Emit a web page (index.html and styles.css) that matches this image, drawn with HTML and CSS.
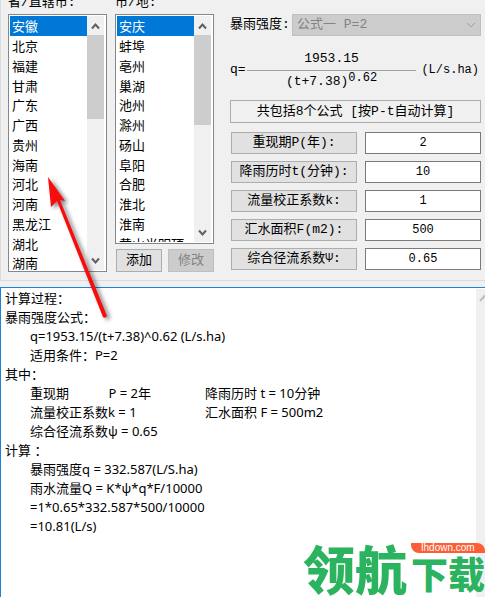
FILE: index.html
```html
<!DOCTYPE html>
<html lang="zh-CN">
<head>
<meta charset="utf-8">
<title>暴雨强度计算</title>
<link rel="stylesheet" href="styles.css">
</head>
<body>
<main class="app">
  <section class="panel">
    <div class="column list-column">
      <label class="heading" for="province">省/直辖市:</label>
      <div class="listbox">
        <select id="province" size="13">
          <option selected>安徽</option><option>北京</option><option>福建</option><option>甘肃</option>
          <option>广东</option><option>广西</option><option>贵州</option><option>海南</option>
          <option>河北</option><option>河南</option><option>黑龙江</option><option>湖北</option>
          <option>湖南</option>
        </select>
        <div class="scrollbar" aria-hidden="true">
          <svg class="arrow" viewBox="0 0 17 19"><path d="M5 12.500L8.500 8.500L12 12.500"/></svg>
          <div class="track"><div class="thumb" style="height: 39%"></div></div>
          <svg class="arrow" viewBox="0 0 17 19"><path d="M5 7.500L8.500 11.500L12 7.500"/></svg>
        </div>
      </div>
    </div>
    <div class="column list-column">
      <label class="heading" for="city">市/地:</label>
      <div class="listbox">
        <select id="city" size="11">
          <option selected>安庆</option><option>蚌埠</option><option>亳州</option><option>巢湖</option>
          <option>池州</option><option>滁州</option><option>砀山</option><option>阜阳</option>
          <option>合肥</option><option>淮北</option><option>淮南</option><option>黄山光明顶</option>
        </select>
        <div class="scrollbar" aria-hidden="true">
          <svg class="arrow" viewBox="0 0 17 19"><path d="M5 12.500L8.500 8.500L12 12.500"/></svg>
          <div class="track"><div class="thumb" style="height: 48%"></div></div>
          <svg class="arrow" viewBox="0 0 17 19"><path d="M5 7.500L8.500 11.500L12 7.500"/></svg>
        </div>
      </div>
      <div class="actions">
        <button type="button" class="button">添加</button>
        <button type="button" class="button" disabled>修改</button>
      </div>
    </div>
    <div class="column form-column">
      <div class="formula-pick">
        <label for="formula">暴雨强度:</label>
        <select class="combo" id="formula" disabled><option>公式一 P=2</option></select>
      </div>
      <div class="formula">
        <span>q=</span>
        <span class="fraction">
          <span class="numerator">1953.15</span>
          <span class="denominator">(t+7.38)<sup>0.62</sup></span>
        </span>
        <span class="unit">(L/s.ha)</span>
      </div>
      <button type="button" class="button summary">共包括8个公式 [按P-t自动计算]</button>
      <div class="fields">
        <button type="button" class="button" id="l-period">重现期P(年):</button>
        <input class="value" aria-labelledby="l-period" value="2">
        <button type="button" class="button" id="l-duration">降雨历时t(分钟):</button>
        <input class="value" aria-labelledby="l-duration" value="10">
        <button type="button" class="button" id="l-factor">流量校正系数k:</button>
        <input class="value" aria-labelledby="l-factor" value="1">
        <button type="button" class="button" id="l-area">汇水面积F(m2):</button>
        <input class="value" aria-labelledby="l-area" value="500">
        <button type="button" class="button" id="l-runoff">综合径流系数Ψ:</button>
        <input class="value" aria-labelledby="l-runoff" value="0.65">
      </div>
    </div>
  </section>
  <div class="result">
    <textarea aria-label="计算过程" readonly>计算过程：
暴雨强度公式：
	q=1953.15/(t+7.38)^0.62 (L/s.ha)
	适用条件：P=2
其中：
	重现期		 P = 2年			降雨历时 t = 10分钟
	流量校正系数k = 1			汇水面积 F = 500m2
	综合径流系数ψ = 0.65
计算 ：
	暴雨强度q = 332.587(L/S.ha)
	雨水流量Q = K*ψ*q*F/10000
	=1*0.65*332.587*500/10000
	=10.81(L/s)</textarea>
    <div class="scrollbar is-idle" aria-hidden="true">
      <svg class="arrow" viewBox="0 0 17 19"><path d="M4 12L8.500 7L13 12"/></svg>
    </div>
  </div>
  <svg class="pointer" viewBox="0 0 76 152" aria-hidden="true">
    <path d="M8 7L11 37L17 31L63 147Q65 149 67 146L20 30L25 31Z"/>
  </svg>
  <div class="brand">
    <span class="brand-main">领航</span>
    <span class="brand-side">
      <span class="brand-url">lhdown.com</span>
      <span class="brand-sub">下载</span>
    </span>
  </div>
</main>
</body>
</html>
```
FILE: styles.css
```css
* { box-sizing: border-box; }

body {
  margin: 0;
  background: #f0f0f0;
  color: #000;
  font: 13px/16px "Liberation Mono", "Noto Sans CJK SC", monospace;
}

button, input, select, textarea { font: inherit; color: inherit; margin: 0; }

.app {
  position: relative;
  display: flex;
  flex-direction: column;
  height: 100vh;
  overflow: hidden;
}

.panel {
  display: flex;
  gap: 8px;
  height: 281px;
  padding: 0 4px 8px 7px;
  border: solid #dcdcdc;
  border-width: 0 0 1px 1px;
}

.column { display: flex; flex-direction: column; }
.list-column { flex: 0 0 99px; }
.form-column { flex: 1; min-width: 0; padding: 14px 0 0 8px; }

.heading {
  display: flex;
  align-items: flex-end;
  height: 14px;
  padding-bottom: 3px;
  white-space: nowrap;
}

.listbox {
  flex: 1;
  display: grid;
  grid-template: minmax(0, 1fr) / minmax(0, 1fr);
  min-height: 0;
  padding: 1px 2px 1px 1px;
  border: 1px solid #828790;
  background: #fff;
}

.listbox select {
  grid-area: 1 / 1;
  width: 100%;
  height: 100%;
  padding: 0;
  border: 0;
  border-radius: 0;
  background: #fff;
  outline: 0;
}

.listbox option {
  height: 20px;
  min-height: 0;
  padding: 0 2px;
  line-height: 20px;
}
.listbox option:nth-child(4n) { height: 19px; }
.listbox option:checked { background: #0078d7 linear-gradient(#0078d7, #0078d7); color: #fff; }

.scrollbar {
  z-index: 1;
  grid-area: 1 / 1;
  justify-self: end;
  display: flex;
  flex-direction: column;
  width: 17px;
  background: #f0f0f0;
}
.track { flex: 1; }
.thumb { background: #cdcdcd; }
.arrow {
  flex: none;
  width: 17px;
  height: 19px;
  fill: none;
  stroke: #606060;
  stroke-width: 2;
}
.is-idle .arrow { stroke: #bfbfbf; }

.actions { display: flex; gap: 6px; padding: 5px 0 0 1px; }
.actions .button { flex: 1; }

.button {
  height: 23px;
  padding: 0;
  border: 1px solid #adadad;
  border-radius: 0;
  background: #e1e1e1;
  white-space: nowrap;
}
.button:disabled { border-color: #bfbfbf; background: #ccc; color: #838383; }

.formula-pick { display: flex; align-items: center; }
.formula-pick label { flex: 0 0 62px; white-space: nowrap; }

.combo {
  flex: 1;
  min-width: 0;
  height: 22px;
  padding: 0 4px;
  border: 1px solid #bfbfbf;
  border-radius: 0;
  appearance: none;
  background: #ccc url("data:image/svg+xml,%3Csvg xmlns='http://www.w3.org/2000/svg' viewBox='0 0 12 12'%3E%3Cpath d='M2 4l4 4 4-4' fill='none' stroke='%23a0a0a0'/%3E%3C/svg%3E") right 3px center / 12px 12px no-repeat;
  color: #838383;
  opacity: 1;
}

.formula {
  display: flex;
  align-items: center;
  gap: 1px;
  height: 64px;
  padding-top: 4px;
}
.fraction { flex: 1; text-align: center; }
.numerator, .denominator { display: block; height: 22px; line-height: 22px; }
.denominator { border-top: 1px solid #a0a0a0; }
.denominator sup { font-size: 12px; line-height: 0; vertical-align: 4px; }
.unit { padding: 0 2px 0 4px; font-size: 12px; }

.summary { background: #f0f0f0; }

.fields {
  display: grid;
  grid-template-columns: 126fr 116fr;
  gap: 7px 8px;
  padding: 9px 0 0 1px;
}
.fields .button { height: 22px; }

.value {
  min-width: 0;
  height: 22px;
  padding: 0;
  border: 1px solid #7a7a7a;
  border-radius: 0;
  background: #fff;
  font-size: 12px;
  text-align: center;
}

.result {
  flex: 1;
  display: grid;
  grid-template: minmax(0, 1fr) / minmax(0, 1fr);
  width: calc(100% + 8px);
  margin-top: 6px;
  padding-top: 1px;
  border: solid #1a84d9;
  border-width: 1px 0 0 1px;
  background: #fff;
}

.result textarea {
  grid-area: 1 / 1;
  width: 100%;
  height: 100%;
  padding: 0 4px;
  border: 0;
  border-radius: 0;
  background: #fff;
  font: 13px/19px "Noto Sans", "Noto Sans CJK SC", sans-serif;
  tab-size: 25px;
  resize: none;
  outline: 0;
}

.pointer {
  position: absolute;
  z-index: 2;
  left: 40px;
  top: 170px;
  width: 76px;
  height: 152px;
  fill: #f80c0c;
  filter: drop-shadow(3px 2px 2px rgba(0, 0, 0, 0.5));
  pointer-events: none;
}

.brand {
  position: absolute;
  z-index: 2;
  right: 0;
  bottom: 4px;
  display: flex;
  gap: 4px;
  color: #2bb35f;
  font-family: "Noto Sans CJK SC", sans-serif;
  font-weight: 900;
}
.brand-main { font-size: 52px; line-height: 50px; }
.brand-side { display: flex; flex-direction: column; }
.brand-url {
  height: 10px;
  border-radius: 0 8px 0 8px;
  background: #fb5f38;
  color: #fff;
  font: 10px/10px "Liberation Sans", sans-serif;
  text-align: center;
}
.brand-sub { font-size: 37px; line-height: 40px; }
```
